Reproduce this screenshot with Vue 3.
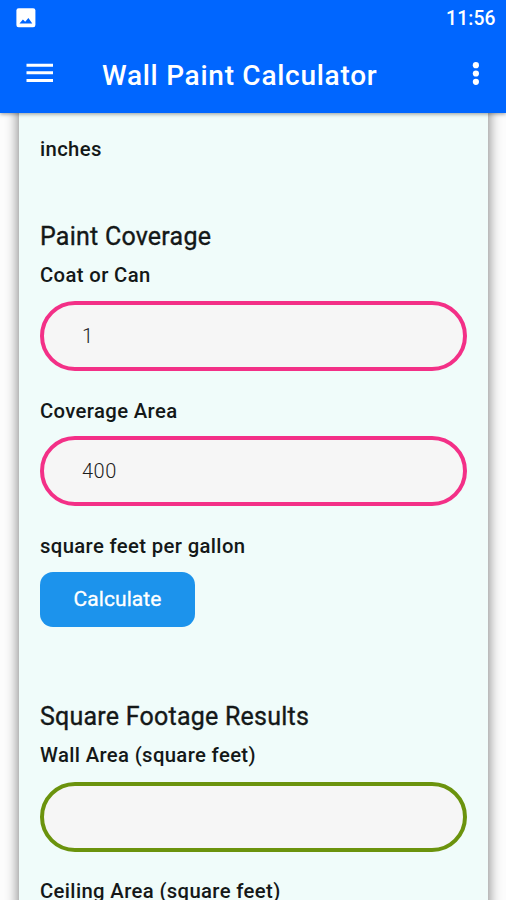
<script setup>
import { ref } from 'vue'

const coats = ref('1')
const coverage = ref('400')
const wallArea = ref('')
</script>

<template>
  <div class="screen">
    <header class="top">
      <div class="status">
        <svg class="picture" viewBox="0 0 20 20" aria-hidden="true">
          <rect x="0.4" y="0.2" width="19" height="19" rx="2.2" fill="#fff" />
          <path d="M3.5 15.4 6.9 11.4l2.3 2.3 3.2-3.7 3.9 5.4z" fill="#0066ff" />
        </svg>
        <span class="clock">11:56</span>
      </div>
      <div class="bar">
        <svg class="menu" viewBox="0 0 27 20" aria-hidden="true">
          <path d="M0.5 2.2h26.5M0.5 9.8h26.5M0.5 17.6h26.5" stroke="#fff" stroke-width="3" />
        </svg>
        <h1 class="title">Wall Paint Calculator</h1>
        <svg class="more" viewBox="0 0 8 24" aria-hidden="true">
          <g fill="#fff">
            <circle cx="3.9" cy="4.2" r="3.1" />
            <circle cx="3.9" cy="12.5" r="3.1" />
            <circle cx="3.9" cy="20.8" r="3.1" />
          </g>
        </svg>
      </div>
    </header>
    <main class="content">
      <section class="card">
        <p class="label inches">inches</p>
        <h2 class="heading">Paint Coverage</h2>
        <p class="label coat">Coat or Can</p>
        <input v-model="coats" class="field" type="text" />
        <p class="label area">Coverage Area</p>
        <input v-model="coverage" class="field near" type="text" />
        <p class="label unit">square feet per gallon</p>
        <button class="calculate" type="button">Calculate</button>
        <h2 class="heading results">Square Footage Results</h2>
        <p class="label wall">Wall Area (square feet)</p>
        <input v-model="wallArea" class="field output" type="text" readonly />
        <p class="label ceiling">Ceiling Area (square feet)</p>
      </section>
    </main>
  </div>
</template>

<style>
body {
  margin: 0;
  overflow: hidden;
}
</style>

<style scoped>
.screen {
  width: 506px;
  height: 900px;
  overflow: hidden;
  display: flex;
  flex-direction: column;
  background: #fdfdfd;
  font-family: Roboto, "Liberation Sans", sans-serif;
  color: #141818;
}
.top {
  position: relative;
  z-index: 1;
  flex: none;
  height: 113px;
  background: #0066ff;
  color: #fff;
  box-shadow: 0 1px 4px rgba(0, 0, 0, 0.4);
}
.status {
  height: 36px;
  box-sizing: border-box;
  padding: 0 10.5px 0 16px;
  display: flex;
  align-items: center;
  justify-content: space-between;
}
.picture {
  width: 20px;
  height: 20px;
  margin-top: -1px;
}
.clock {
  font-size: 19.3px;
  font-weight: 500;
  letter-spacing: 0.1px;
}
.bar {
  height: 77px;
  box-sizing: border-box;
  padding: 0 26px;
  display: flex;
  align-items: center;
}
.menu {
  width: 27px;
  height: 20px;
  margin-top: -3px;
}
.title {
  margin: 3px 0 0 49px;
  flex: 1;
  font-size: 28px;
  line-height: 34px;
  font-weight: 500;
  letter-spacing: 0.73px;
  white-space: nowrap;
}
.more {
  width: 8px;
  height: 24px;
  margin-top: -3px;
}
.content {
  flex: 1;
  min-height: 0;
  padding: 0 18px 0 19px;
}
.card {
  height: 860px;
  box-sizing: border-box;
  margin-top: -20px;
  padding: 44px 21px 0;
  background: #f0fcfa;
  box-shadow: 0 0 13px 0 rgba(0, 0, 0, 0.55);
}
.label {
  margin: 0;
  font-size: 20.3px;
  line-height: 24px;
  font-weight: 500;
  letter-spacing: 0.36px;
  white-space: nowrap;
}
.heading {
  margin: 61px 0 0;
  font-size: 25px;
  line-height: 30px;
  font-weight: 400;
  letter-spacing: 0.23px;
  -webkit-text-stroke: 0.35px currentColor;
}
.coat {
  margin-top: 11px;
}
.field {
  display: block;
  width: 427px;
  height: 70px;
  box-sizing: border-box;
  margin: 14px 0 0;
  padding: 0 38px;
  border: 4px solid #f33087;
  border-radius: 35px;
  background: #f6f6f6;
  color: #1c1c1c;
  font-family: inherit;
  font-size: 20px;
  font-weight: 300;
  letter-spacing: 0.5px;
  outline: none;
}
.near {
  margin-top: 13px;
}
.area,
.unit {
  margin-top: 28px;
}
.calculate {
  display: block;
  width: 155px;
  height: 55px;
  margin: 14px 0 0;
  padding: 0 0 2px;
  border: 0;
  border-radius: 13px;
  background: #1c93ec;
  color: #fff;
  font-family: inherit;
  font-size: 21px;
  font-weight: 400;
  letter-spacing: 0.05px;
  -webkit-text-stroke: 0.3px currentColor;
}
.results {
  margin-top: 75px;
}
.wall {
  margin-top: 11px;
}
.output {
  margin-top: 15px;
  border-color: #6b930d;
}
.ceiling {
  margin-top: 27px;
}
</style>
